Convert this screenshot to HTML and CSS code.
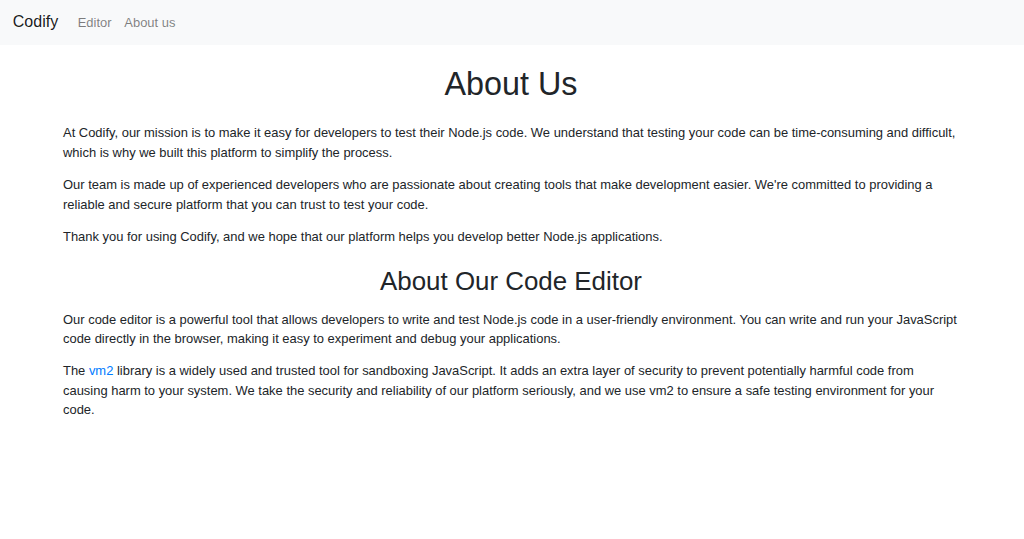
FILE: index.html
```html
<!DOCTYPE html>
<html lang="en">
<head>
<meta charset="utf-8">
<title>Codify - About us</title>
<link rel="stylesheet" href="styles.css">
</head>
<body>
<nav class="navbar">
  <a class="brand" href="#">Codify</a>
  <ul class="nav">
    <li><a class="nav-link" href="#">Editor</a></li>
    <li><a class="nav-link" href="#">About us</a></li>
  </ul>
</nav>
<main class="container">
  <h1 class="title">About Us</h1>
  <p>At Codify, our mission is to make it easy for developers to test their Node.js code. We understand that testing your code can be time-consuming and difficult, which is why we built this platform to simplify the process.</p>
  <p>Our team is made up of experienced developers who are passionate about creating tools that make development easier. We're committed to providing a reliable and secure platform that you can trust to test your code.</p>
  <p>Thank you for using Codify, and we hope that our platform helps you develop better Node.js applications.</p>
  <h2 class="subtitle">About Our Code Editor</h2>
  <p>Our code editor is a powerful tool that allows developers to write and test Node.js code in a user-friendly environment. You can write and run your JavaScript code directly in the browser, making it easy to experiment and debug your applications.</p>
  <p>The <a class="link" href="#">vm2</a> library is a widely used and trusted tool for sandboxing JavaScript. It adds an extra layer of security to prevent potentially harmful code from causing harm to your system. We take the security and reliability of our platform seriously, and we use vm2 to ensure a safe testing environment for your code.</p>
</main>
</body>
</html>
```

FILE: styles.css
```css
* { box-sizing: border-box; }
html, body { margin: 0; padding: 0; }
body {
  font-family: "Liberation Sans", Arial, sans-serif;
  font-size: 12.95px;
  line-height: 19.4px;
  color: #212529;
  background: #fff;
}
.navbar {
  height: 44.8px;
  background: #f8f9fa;
  display: flex;
  align-items: center;
  padding: 6.4px 12.8px;
}
.brand {
  font-size: 16px;
  line-height: 24px;
  padding: 4px 0;
  color: rgba(0, 0, 0, 0.9);
  text-decoration: none;
  margin-right: 13.2px;
}
.nav {
  list-style: none;
  margin: 0;
  padding: 0;
  display: flex;
}
.nav-link {
  display: block;
  padding: 6.4px;
  font-size: 12.95px;
  line-height: 19.2px;
  color: rgba(0, 0, 0, 0.5);
  text-decoration: none;
}
.container {
  max-width: 898px;
  margin: 0 auto;
  padding-right: 2px;
}
.title {
  font-size: 32.3px;
  font-weight: 400;
  line-height: 38.8px;
  text-align: center;
  margin: 20.4px 0 19.4px;
}
.subtitle {
  font-size: 25.9px;
  font-weight: 400;
  line-height: 31px;
  text-align: center;
  margin: 19.9px 0 12.5px;
}
p { margin: 0 0 12.95px; }
.link { color: #007bff; text-decoration: none; }
```
